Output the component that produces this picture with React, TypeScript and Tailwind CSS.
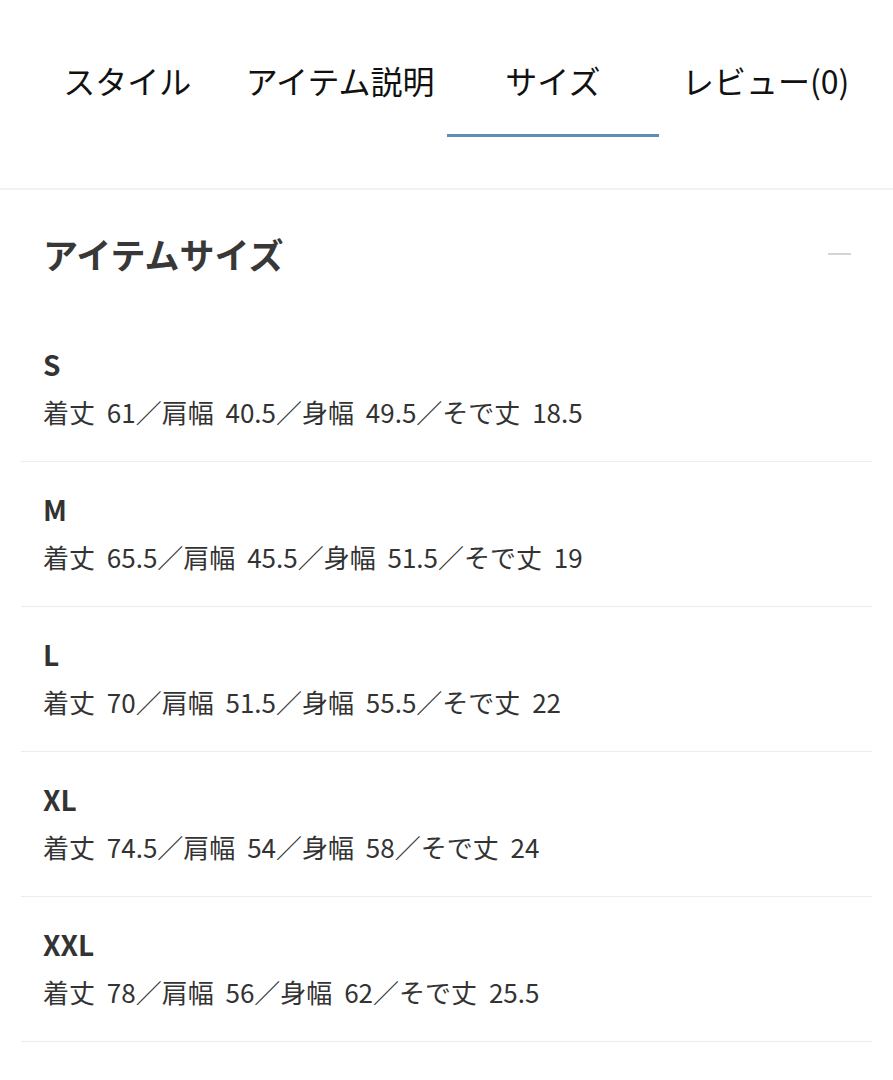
const TABS = ["スタイル", "アイテム説明", "サイズ", "レビュー(0)"];
const ACTIVE = 2;

const SIZES = [
  { label: "S", spec: "着丈 61／肩幅 40.5／身幅 49.5／そで丈 18.5" },
  { label: "M", spec: "着丈 65.5／肩幅 45.5／身幅 51.5／そで丈 19" },
  { label: "L", spec: "着丈 70／肩幅 51.5／身幅 55.5／そで丈 22" },
  { label: "XL", spec: "着丈 74.5／肩幅 54／身幅 58／そで丈 24" },
  { label: "XXL", spec: "着丈 78／肩幅 56／身幅 62／そで丈 25.5" },
];

export default function App() {
  return (
    <div className="min-h-screen bg-white font-['Noto_Sans_CJK_JP','Noto_Sans',sans-serif] text-[#333]">
      {/* tabs */}
      <nav className="grid grid-cols-4 border-b-2 border-[#f2f2f2] px-[21px]">
        {TABS.map((tab, i) => (
          <div key={tab} className="flex flex-col items-center pt-[56px] pb-[51px]">
            <span className="text-[32px] leading-[48px] text-[#111] whitespace-nowrap">{tab}</span>
            <div className={`mt-[30px] h-[3px] w-full ${i === ACTIVE ? "bg-[#5b8fb9]" : "bg-transparent"}`} />
          </div>
        ))}
      </nav>

      {/* size section */}
      <section>
        <div className="flex h-[127px] items-center justify-between pl-[43px] pr-[42px]">
          <h2 className="text-[35px] font-bold leading-none text-[#383838]">アイテムサイズ</h2>
          <span className="h-[2px] w-[23px] bg-[#d4d4d4]" />
        </div>

        <div className="mx-[21px]">
          {SIZES.map((s) => (
            <div key={s.label} className="border-b border-[#ececec] pt-[29px] pb-[31px] pl-[22px]">
              <div className="text-[28px] font-semibold leading-[36px] text-[#333]">{s.label}</div>
              <div className="mt-[12px] text-[26px] leading-[36px] text-[#333] [word-spacing:6px]">{s.spec}</div>
            </div>
          ))}
        </div>
      </section>
    </div>
  );
}
